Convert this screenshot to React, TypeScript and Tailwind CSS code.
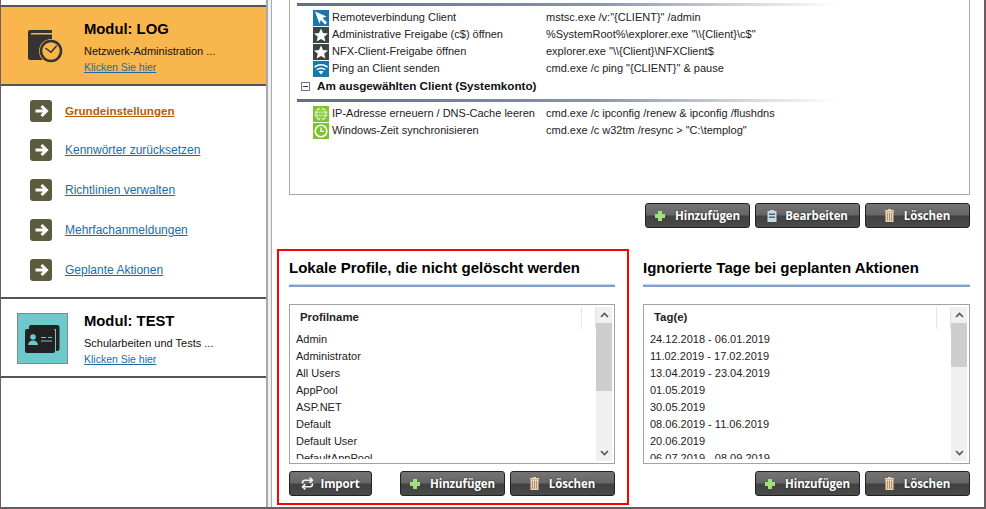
import React from 'react';
import { Repeat } from 'lucide-react';

const sans = "font-['Liberation_Sans',Arial,sans-serif]";

const Cursor = () => (
  <svg width="16" height="16" viewBox="0 0 16 16"><rect width="16" height="16" fill="#1878ae" /><path d="M2 1.5 L13.5 6.5 L9.5 8 L14 12.5 L12 14.5 L7.8 10 L6.5 13.8 Z" fill="#fff" /></svg>
);
const Star = () => (
  <svg width="16" height="16" viewBox="0 0 16 16"><rect width="16" height="16" fill="#3b4443" /><path d="M8 1.5 L10 6 L15 6.5 L11.2 9.7 L12.4 14.5 L8 12 L3.6 14.5 L4.8 9.7 L1 6.5 L6 6 Z" fill="#fff" /></svg>
);
const Wifi = () => (
  <svg width="16" height="16" viewBox="0 0 16 16"><rect width="16" height="16" fill="#1878ae" /><path d="M1.5 6 Q8 1.5 14.5 6 M3.8 8.6 Q8 5.8 12.2 8.6" fill="none" stroke="#fff" strokeWidth="1.6" /><path d="M5.5 10.5 Q8 9 10.5 10.5 L8 13.5 Z" fill="#fff" /></svg>
);
const Globe = () => (
  <svg width="16" height="16" viewBox="0 0 16 16"><rect width="16" height="16" fill="#7cc42a" /><circle cx="8" cy="8" r="6.5" fill="#d9efbc" /><path d="M1.5 8 H14.5 M2.5 4.8 H13.5 M2.5 11.2 H13.5 M8 1.5 V14.5 M8 1.5 Q3 8 8 14.5 M8 1.5 Q13 8 8 14.5" fill="none" stroke="#7cc42a" strokeWidth="0.9" /></svg>
);
const Clock = () => (
  <svg width="16" height="16" viewBox="0 0 16 16"><rect width="16" height="16" fill="#7cc42a" /><circle cx="8" cy="8" r="5.8" fill="none" stroke="#fff" strokeWidth="1.6" /><path d="M8 4.5 V8.4 H11" fill="none" stroke="#fff" strokeWidth="1.3" /></svg>
);

const BookClock = () => (
  <svg width="35" height="33" viewBox="0 0 35 33">
    <path d="M2 0 H24 V3 H3 V4.5 H24 V30 H2 Q0 30 0 28 V2 Q0 0 2 0 Z" fill="#333" />
    <circle cx="23" cy="21" r="12" fill="#f9b64c" />
    <circle cx="23" cy="21" r="10" fill="none" stroke="#333" strokeWidth="2.6" />
    <path d="M17.3 18 L23 22.3 L28.7 15.7" fill="none" stroke="#333" strokeWidth="1.5" />
  </svg>
);

const CardIcon = () => (
  <svg width="35" height="28" viewBox="0 0 35 28">
    <path d="M4 2 Q4 0 6 0 H32 Q34.5 0 34.5 2 V24 Q34.5 26 32 26 H31 V4 H4 Z" fill="#222" />
    <rect x="0" y="4" width="30" height="24" rx="2" fill="#222" />
    <circle cx="8" cy="12" r="2.8" fill="#6ec9cc" />
    <path d="M3 20 Q3.5 15.5 8 15.5 Q12.5 15.5 13 20 Z" fill="#6ec9cc" />
    <path d="M16 12.5 H21 M23 12.5 H27 M16 16 H27" stroke="#6ec9cc" strokeWidth="1.2" />
  </svg>
);

const Trash = () => (
  <svg width="9" height="13" viewBox="0 0 9 13">
    <path d="M3 0 H6 V1 H3 Z M0 1 H9 V2.5 H0 Z" fill="#ecd2ae" />
    <path d="M0.5 2.5 H8.5 V13 H0.5 Z" fill="#ecd2ae" />
    <path d="M2.5 4 V12 M4.5 4 V12 M6.5 4 V12" stroke="#9a856c" strokeWidth="0.8" />
  </svg>
);

const Clip = () => (
  <svg width="10" height="12" viewBox="0 0 10 12">
    <path d="M0.5 1 H3 V0 H7 V1 H9.5 V12 H0.5 Z" fill="#c5dbe8" />
    <path d="M2 3.5 H8 V5 H2 Z M2 6.5 H8 V8 H2 Z" fill="#56656e" />
  </svg>
);

const PlusIcon = () => (
  <svg width="10" height="10" viewBox="0 0 10 10"><path d="M3 0 H7 V3 H10 V7 H7 V10 H3 V7 H0 V3 H3 Z" fill="#9fe27c" /></svg>
);

const Btn = ({ icon, label, w = 'w-[105px]', gap = 'gap-[10px]' }: { icon: React.ReactNode; label: string; w?: string; gap?: string }) => (
  <button className={`${w} ${gap} h-[25px] flex items-center justify-center rounded-[3px] border border-[#222] bg-[linear-gradient(#747474_0%,#666_48%,#414141_52%,#4a4a4a_100%)] text-white text-[11.5px] font-bold font-['Open_Sans',sans-serif] tracking-[-0.1px] [text-shadow:0_0_2px_#222]`}>
    {icon}
    <span>{label}</span>
  </button>
);

const AddBtn = () => <Btn icon={<PlusIcon />} label="Hinzufügen" />;
const DelBtn = () => <Btn icon={<Trash />} label="Löschen" />;

const NavItem = ({ label, active }: { label: string; active?: boolean }) => (
  <div className={`flex items-center pl-[29px] gap-[13px] ${active ? 'h-[39px]' : 'h-[40px]'}`}>
    <div className="w-[22px] h-[22px] rounded-[3px] bg-[#5b5b3f] flex items-center justify-center">
      <svg width="15" height="14" viewBox="0 0 15 14"><path d="M1.5 7 H12 M7.5 2 L12.5 7 L7.5 12" fill="none" stroke="#fff" strokeWidth="3" /></svg>
    </div>
    <a className={`underline ${active ? 'text-[11.6px] font-bold text-[#b95c0a]' : 'text-[12px] text-[#1c6ca1]'}`}>{label}</a>
  </div>
);

const ActionRow = ({ icon, name, cmd }: { icon: React.ReactNode; name: string; cmd: string }) => (
  <div className="flex items-center h-[17px] pl-[23px]">
    <span className="w-[19px] flex-none">{icon}</span>
    <span className="w-[214px] flex-none">{name}</span>
    <span>{cmd}</span>
  </div>
);

const Rule = () => <div className="h-[3px] w-[543px] ml-[7px] bg-[linear-gradient(90deg,#5f6e8c_0%,#8a94a8_55%,#ffffff_100%)]" />;

const ListBox = ({ title, rows, thumb }: { title: string; rows: string[]; thumb: string }) => (
  <div className="h-[160px] border border-[#a3a3a3] bg-white flex overflow-hidden">
    <div className="flex-1 min-w-0">
      <div className="h-[25px] flex items-center">
        <div className="flex-1 pl-[10px] text-[11.4px] font-bold text-[#222]">{title}</div>
        <div className="w-[15px] h-[22px] border-x border-[#e4e4e4]" />
      </div>
      <div className="h-[129px] overflow-hidden pl-[6px] pt-px text-[#222]">
        {rows.map((r) => (
          <div key={r} className="h-[17px] leading-[17px]">{r}</div>
        ))}
      </div>
    </div>
    <div className="w-[16px] flex-none mr-[2px] my-[2px] bg-[#f0f0f0] flex flex-col">
      <div className="h-[16px] flex items-center justify-center">
        <svg width="9" height="6" viewBox="0 0 9 6"><path d="M1 5 L4.5 1.5 L8 5" fill="none" stroke="#555" strokeWidth="1.6" /></svg>
      </div>
      <div className={`${thumb} bg-[#cdcdcd]`} />
      <div className="flex-1" />
      <div className="h-[16px] flex items-center justify-center">
        <svg width="9" height="6" viewBox="0 0 9 6"><path d="M1 1 L4.5 4.5 L8 1" fill="none" stroke="#555" strokeWidth="1.6" /></svg>
      </div>
    </div>
  </div>
);

const Heading = ({ children }: { children: React.ReactNode }) => (
  <div className="h-[36px] pt-[8px]">
    <div className="h-[25px] text-[15px] leading-[18px] font-bold text-black whitespace-nowrap">{children}</div>
    <div className="h-[3px] bg-[#7f9fce] border-t border-[#c8d6ea]" />
  </div>
);

export default function App() {
  return (
    <div className={`w-[986px] h-[509px] flex overflow-hidden bg-white text-[11px] text-[#222] ${sans} border-l border-l-[#75585a] border-r-2 border-r-[#6b5c62] border-b-2 border-b-[#6b5c62]`}>
      {/* sidebar */}
      <aside className="w-[265px] flex-none pt-[5px]">
        <div className="h-[81px] bg-[#f9b64c] border-y-2 border-[#555] flex">
          <div className="w-[83px] flex-none pl-[27px] pt-[23px]"><BookClock /></div>
          <div className="pt-[13px]">
            <div className="text-[14.8px] leading-[18px] font-bold text-black">Modul: LOG</div>
            <div className="text-[11px] leading-[14px] mt-[6px] text-[#111]">Netzwerk-Administration ...</div>
            <a className="block text-[10.5px] leading-[14px] mt-[2px] underline text-[#1c6ca1]">Klicken Sie hier</a>
          </div>
        </div>
        <div className="pt-[5px] h-[211px]">
          <NavItem label="Grundeinstellungen" active />
          <NavItem label="Kennwörter zurücksetzen" />
          <NavItem label="Richtlinien verwalten" />
          <NavItem label="Mehrfachanmeldungen" />
          <NavItem label="Geplante Aktionen" />
        </div>
        <div className="h-[81px] border-y-2 border-[#555] flex">
          <div className="w-[83px] flex-none pl-[16px] pt-[14px]">
            <div className="w-[51px] h-[51px] bg-[#6ec9cc] border border-[#7c8c8c] flex items-center justify-center"><CardIcon /></div>
          </div>
          <div className="pt-[13px]">
            <div className="text-[14.8px] leading-[18px] font-bold text-black">Modul: TEST</div>
            <div className="text-[11px] leading-[14px] mt-[6px] text-[#111]">Schularbeiten und Tests ...</div>
            <a className="block text-[10.5px] leading-[14px] mt-[2px] underline text-[#1c6ca1]">Klicken Sie hier</a>
          </div>
        </div>
      </aside>

      {/* splitter */}
      <div className="w-[5px] flex-none border-l-2 border-l-[#a8a8a8] bg-[#f0f0f0]" />

      {/* main */}
      <main className="flex-1 min-w-0 border-l border-l-[#a9a9a9] pl-[5px] pr-[14px]">
        <div className="ml-[12px] h-[195px] border border-t-0 border-[#aaa] pt-[3px] text-[#222]">
          <Rule />
          <div className="pt-[3px]">
            <ActionRow icon={<Cursor />} name="Remoteverbindung Client" cmd={'mstsc.exe /v:"{CLIENT}" /admin'} />
            <ActionRow icon={<Star />} name="Administrative Freigabe (c$) öffnen" cmd={'%SystemRoot%\\explorer.exe "\\\\{Client}\\c$"'} />
            <ActionRow icon={<Star />} name="NFX-Client-Freigabe öffnen" cmd={'explorer.exe "\\\\{Client}\\NFXClient$'} />
            <ActionRow icon={<Wifi />} name="Ping an Client senden" cmd={'cmd.exe /c ping "{CLIENT}" & pause'} />
          </div>
          <div className="h-[22px] pb-[4px] flex items-center pl-[11px] gap-[7px] text-[11.7px] font-bold text-[#111]">
            <span className="w-[9px] h-[9px] border border-[#777] flex items-center justify-center"><span className="w-[5px] h-px bg-[#333]" /></span>
            Am ausgewählten Client (Systemkonto)
          </div>
          <Rule />
          <div className="pt-[3px]">
            <ActionRow icon={<Globe />} name="IP-Adresse erneuern / DNS-Cache leeren" cmd="cmd.exe /c ipconfig /renew & ipconfig /flushdns" />
            <ActionRow icon={<Clock />} name="Windows-Zeit synchronisieren" cmd={'cmd.exe /c w32tm /resync > "C:\\templog"'} />
          </div>
        </div>

        <div className="flex justify-end gap-[5px] mt-[8px]">
          <AddBtn />
          <Btn icon={<Clip />} label="Bearbeiten" gap="gap-[8px]" />
          <DelBtn />
        </div>

        <div className="flex gap-[14px] mt-[21px]">
          <section className="w-[352px] h-[256px] flex-none border-2 border-[#f00] pl-[10px] pr-[12px]">
            <Heading>Lokale Profile, die nicht gelöscht werden</Heading>
            <div className="mt-[17px]">
              <ListBox title="Profilname" thumb="h-[68px]" rows={['Admin', 'Administrator', 'All Users', 'AppPool', 'ASP.NET', 'Default', 'Default User', 'DefaultAppPool']} />
            </div>
            <div className="flex gap-[5px] mt-[7px]">
              <Btn icon={<Repeat size={13} strokeWidth={3.2} color="#f0f0f0" />} label="Import" w="w-[83px] mr-[23px]" gap="gap-[6px]" />
              <AddBtn />
              <DelBtn />
            </div>
          </section>
          <section className="flex-1 min-w-0 pt-[2px]">
            <Heading>Ignorierte Tage bei geplanten Aktionen</Heading>
            <div className="mt-[17px]">
              <ListBox title="Tag(e)" thumb="h-[44px]" rows={['24.12.2018 - 06.01.2019', '11.02.2019 - 17.02.2019', '13.04.2019 - 23.04.2019', '01.05.2019', '30.05.2019', '08.06.2019 - 11.06.2019', '20.06.2019', '06.07.2019 - 08.09.2019']} />
            </div>
            <div className="flex justify-end gap-[5px] mt-[7px]">
              <AddBtn />
              <DelBtn />
            </div>
          </section>
        </div>
      </main>
    </div>
  );
}
